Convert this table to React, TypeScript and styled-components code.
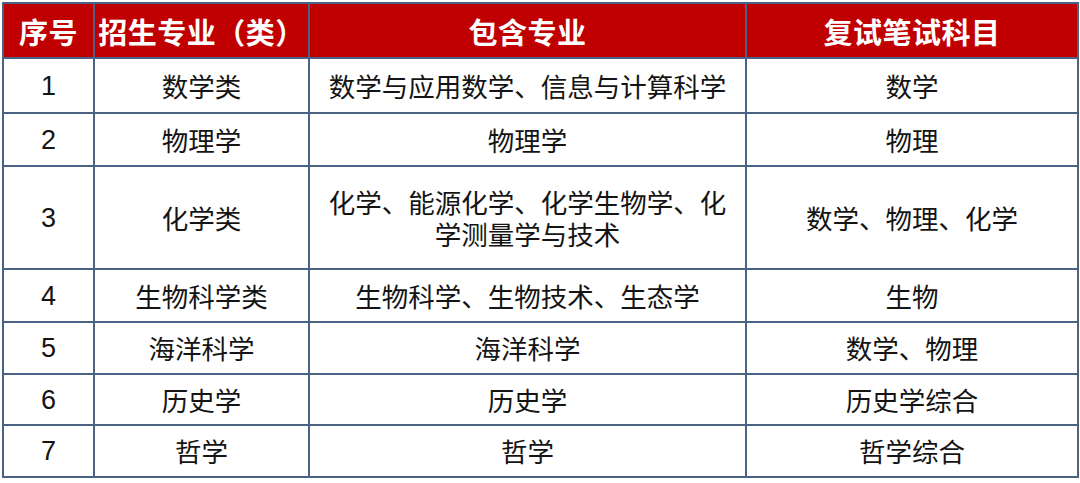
import React, { FC } from 'react';
import styled, { createGlobalStyle } from 'styled-components';

const GlobalStyle = createGlobalStyle`
  html, body {
    margin: 0;
    padding: 0;
    background: #ffffff;
  }
`;

const Page = styled.div`
  width: 1080px;
  height: 483px;
  padding: 2px 3px 0 2px;
  box-sizing: border-box;
  background: #ffffff;
`;

const Table = styled.table`
  width: 1075px;
  border-collapse: collapse;
  table-layout: fixed;
  font-family: "Noto Sans CJK SC", "Noto Sans", sans-serif;
`;

const HeadCell = styled.th`
  background: #c00000;
  color: #ffffff;
  font-size: 29px;
  font-weight: 700;
  height: 53px;
  padding: 0;
  border: 2px solid #4b6382;
  text-align: center;
  vertical-align: middle;
  white-space: nowrap;
  letter-spacing: 0.5px;
`;

const Row = styled.tr<{ $h: number }>`
  height: ${p => p.$h}px;
`;

const Cell = styled.td<{ $num?: boolean }>`
  border: 2px solid #4b6382;
  padding: 0 16px;
  text-align: center;
  vertical-align: middle;
  color: #141414;
  font-size: ${p => (p.$num ? '27px' : '26.5px')};
  font-family: ${p => (p.$num ? '"Liberation Sans", Arial, sans-serif' : '"Noto Sans CJK SC", "Noto Sans", sans-serif')};
  line-height: 32px;
`;

interface IMajor {
  no: string;
  name: string;
  includes: string;
  exam: string;
  height: number;
}

const majors: IMajor[] = [
  { no: '1', name: '数学类', includes: '数学与应用数学、信息与计算科学', exam: '数学', height: 55 },
  { no: '2', name: '物理学', includes: '物理学', exam: '物理', height: 53 },
  { no: '3', name: '化学类', includes: '化学、能源化学、化学生物学、化学测量学与技术', exam: '数学、物理、化学', height: 103 },
  { no: '4', name: '生物科学类', includes: '生物科学、生物技术、生态学', exam: '生物', height: 53 },
  { no: '5', name: '海洋科学', includes: '海洋科学', exam: '数学、物理', height: 52 },
  { no: '6', name: '历史学', includes: '历史学', exam: '历史学综合', height: 51 },
  { no: '7', name: '哲学', includes: '哲学', exam: '哲学综合', height: 52 },
];

const App: FC = () => {
  return (
    <React.Fragment>
      <GlobalStyle />
      <Page>
        <Table>
          <colgroup>
            <col style={{ width: 91 }} />
            <col style={{ width: 215 }} />
            <col style={{ width: 437 }} />
            <col style={{ width: 332 }} />
          </colgroup>
          <thead>
            <tr>
              <HeadCell>序号</HeadCell>
              <HeadCell>招生专业（类）</HeadCell>
              <HeadCell>包含专业</HeadCell>
              <HeadCell>复试笔试科目</HeadCell>
            </tr>
          </thead>
          <tbody>
            {majors.map(m => (
              <Row $h={m.height} key={m.no}>
                <Cell $num>{m.no}</Cell>
                <Cell>{m.name}</Cell>
                <Cell>{m.includes}</Cell>
                <Cell>{m.exam}</Cell>
              </Row>
            ))}
          </tbody>
        </Table>
      </Page>
    </React.Fragment>
  );
};

export default App;
